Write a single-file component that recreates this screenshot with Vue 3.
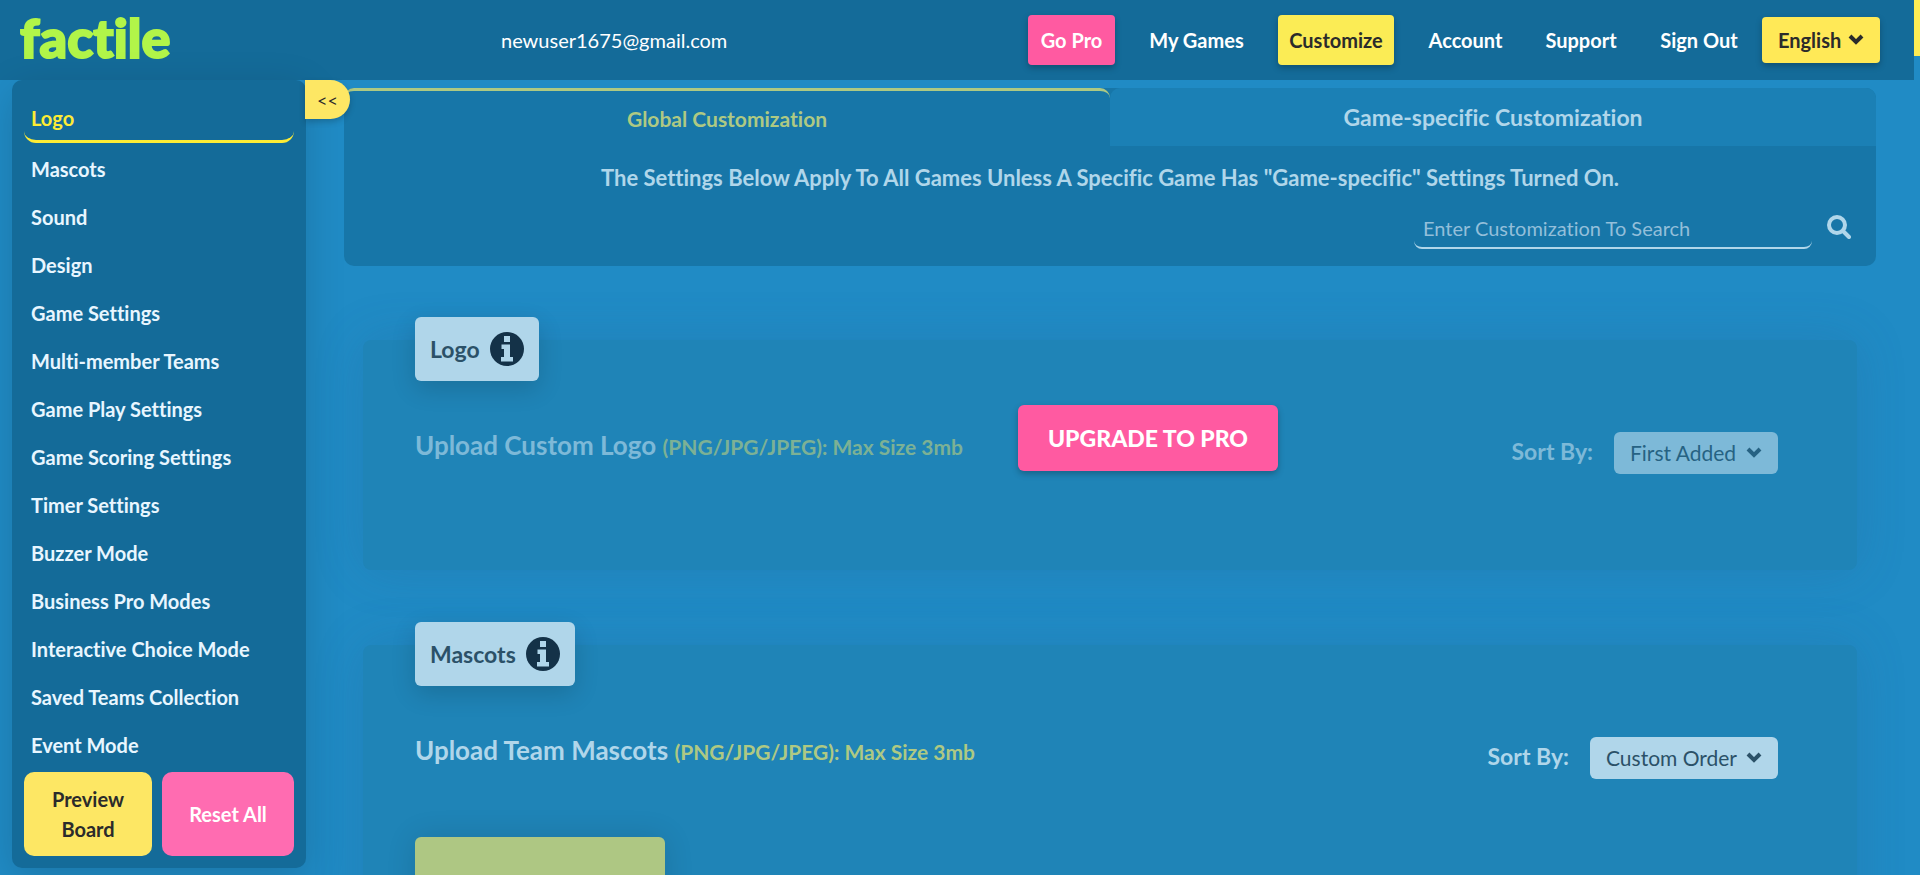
<script setup>
import { ref } from 'vue'

const menu = [
  'Logo', 'Mascots', 'Sound', 'Design', 'Game Settings', 'Multi-member Teams',
  'Game Play Settings', 'Game Scoring Settings', 'Timer Settings', 'Buzzer Mode',
  'Business Pro Modes', 'Interactive Choice Mode', 'Saved Teams Collection', 'Event Mode',
]
const active = ref('Logo')
const search = ref('')
const sections = [
  { id: 'logo', name: 'Logo', title: 'Upload Custom Logo', sort: 'First Added', locked: true },
  { id: 'mascots', name: 'Mascots', title: 'Upload Team Mascots', sort: 'Custom Order', locked: false },
]
</script>

<template>
  <div class="window">
    <div class="page">
      <header class="topbar">
        <a class="brand" href="#">factile</a>
        <span class="email">newuser1675@gmail.com</span>
        <nav class="nav">
          <a class="pill pink" href="#">Go Pro</a>
          <a class="games" href="#">My Games</a>
          <a class="pill yellow" href="#">Customize</a>
          <a class="account" href="#">Account</a>
          <a class="support" href="#">Support</a>
          <a class="signout" href="#">Sign Out</a>
        </nav>
        <div class="picker language">
          <select aria-label="Language"><option>English</option></select>
          <svg class="chevron" viewBox="0 0 16 12"><path d="M2 3l6 6 6-6" /></svg>
        </div>
      </header>

      <div class="body">
        <aside class="sidebar">
          <button class="toggle" type="button" aria-label="Collapse menu">&lt;&lt;</button>
          <nav class="menu">
            <a
              v-for="item in menu"
              :key="item"
              href="#"
              :class="{ active: item === active }"
              @click.prevent="active = item"
            >{{ item }}</a>
          </nav>
          <div class="actions">
            <button class="preview" type="button">Preview Board</button>
            <button class="reset" type="button">Reset All</button>
          </div>
        </aside>

        <main class="content">
          <section class="intro">
            <div class="tabs">
              <button class="tab current" type="button">Global Customization</button>
              <button class="tab other" type="button">Game-specific Customization</button>
            </div>
            <p class="note">The Settings Below Apply To All Games Unless A Specific Game Has "Game-specific" Settings Turned On.</p>
            <form class="search" @submit.prevent>
              <input v-model="search" type="text" aria-label="Search customization" placeholder="Enter Customization To Search" />
              <button type="submit" aria-label="Search">
                <svg viewBox="0 0 24 24"><circle cx="10" cy="10" r="8" /><path d="M16 16l6 6" /></svg>
              </button>
            </form>
          </section>

          <section v-for="s in sections" :key="s.id" class="card" :class="{ locked: s.locked }">
            <h2 class="badge">
              {{ s.name }}
              <svg viewBox="0 0 34 34">
                <circle cx="17" cy="17" r="17" />
                <path d="M14 4h6v6h-6zM11.500 12.500h8.500v12.500h3v4.500h-12v-4.500h3v-8h-2.500z" />
              </svg>
            </h2>
            <div class="row">
              <h3 class="title">{{ s.title }} <small>(PNG/JPG/JPEG): Max Size 3mb</small></h3>
              <label class="sort-label" :for="'sort-' + s.id">Sort By:</label>
              <div class="picker" :class="s.id">
                <select :id="'sort-' + s.id"><option>{{ s.sort }}</option></select>
                <svg class="chevron" viewBox="0 0 16 12"><path d="M2 3l6 6 6-6" /></svg>
              </div>
            </div>
            <button v-if="s.locked" class="upgrade" type="button">UPGRADE TO PRO</button>
            <div v-else class="tile"></div>
          </section>
        </main>
      </div>
    </div>
    <div class="track"><div class="thumb"></div></div>
  </div>
</template>

<style>
body {
  background: #208bc5;
  overflow: hidden;
}
</style>

<style scoped>
.window {
  display: flex;
  height: 100vh;
  overflow: hidden;
  background: #208bc5;
  font-family: Lato, "Liberation Sans", sans-serif;
  font-size: 20px;
  line-height: 30px;
  font-variant-ligatures: none;
  color: #fff;
}
.window *,
.window {
  box-sizing: border-box;
}
a {
  color: inherit;
  text-decoration: none;
}
button,
select,
input {
  font: inherit;
  font-variant-ligatures: none;
  color: inherit;
  border: 0;
  padding: 0;
  background: none;
}
button,
select {
  cursor: pointer;
}
.page {
  flex: 1;
  min-width: 0;
}
.track {
  width: 6px;
}
.thumb {
  height: 56px;
  background: #fdec54;
}

.topbar {
  display: flex;
  align-items: center;
  height: 80px;
  padding: 0 34px 0 20px;
  background: #146b99;
}
.brand {
  width: 481px;
  padding-bottom: 4px;
  font-size: 54px;
  font-weight: 900;
  line-height: 72px;
  color: #b2f549;
  -webkit-text-stroke: 2px #b2f549;
}
.email {
  flex: 1;
}
.nav {
  display: flex;
  align-items: center;
  gap: 34px;
  font-weight: 700;
  text-align: center;
  white-space: nowrap;
}
.pill {
  height: 50px;
  line-height: 50px;
  border-radius: 4px;
  box-shadow: 0 3px 6px rgba(0, 0, 0, 0.25);
}
.pink {
  width: 87px;
  background: #ff5aa1;
}
.games {
  width: 95px;
}
.yellow {
  width: 116px;
  background: #fbec55;
  color: #2b2b2b;
}
.account {
  width: 75px;
}
.support {
  width: 88px;
}
.signout {
  width: 80px;
}

.picker {
  position: relative;
  height: 42px;
  border-radius: 6px;
  background: #b0d6ea;
  color: #2b5168;
  font-size: 21px;
}
.picker select {
  appearance: none;
  width: 100%;
  height: 100%;
  padding-left: 16px;
  border-radius: inherit;
}
.chevron {
  position: absolute;
  right: 16px;
  top: 50%;
  width: 16px;
  height: 12px;
  margin-top: -7px;
  fill: none;
  stroke: currentColor;
  stroke-width: 4;
  pointer-events: none;
}
.picker.language {
  width: 118px;
  height: 46px;
  margin-left: 23px;
  border-radius: 4px;
  background: #ffe957;
  color: #2b2b2b;
  font-size: 20px;
  font-weight: 700;
  box-shadow: 0 3px 6px rgba(0, 0, 0, 0.25);
}
.picker.logo {
  width: 164px;
}
.picker.mascots {
  width: 188px;
}

.body {
  display: flex;
  align-items: flex-start;
  padding: 0 38px 0 12px;
}
.sidebar {
  position: relative;
  flex: none;
  width: 294px;
  margin-right: 38px;
  padding: 15px 12px 12px;
  border-radius: 10px;
  background: #146b99;
  box-shadow: 0 10px 40px rgba(0, 0, 0, 0.15);
}
.toggle {
  position: absolute;
  top: 0;
  left: 293px;
  width: 45px;
  height: 39px;
  border-radius: 0 20px 20px 0;
  background: #fde764;
  color: #2b2b2b;
  font-size: 18px;
  box-shadow: 0 3px 6px rgba(0, 0, 0, 0.2);
}
.menu {
  display: flex;
  flex-direction: column;
  font-weight: 700;
  color: #e8f6ff;
}
.menu a {
  height: 48px;
  padding: 0 7px;
  line-height: 48px;
}
.menu .active {
  margin-bottom: 2px;
  border-bottom: 3px solid #fdec35;
  border-radius: 12px;
  line-height: 46px;
  color: #fdec35;
}
.actions {
  display: flex;
  gap: 10px;
  margin-top: 3px;
}
.actions button {
  height: 84px;
  border-radius: 10px;
  font-weight: 700;
}
.preview {
  width: 128px;
  padding: 0 20px;
  background: #fde764;
  color: #2b2b2b;
}
.reset {
  flex: 1;
  background: #ff6cb1;
}

.content {
  flex: 1;
  min-width: 0;
  padding-top: 8px;
}
.intro {
  padding-bottom: 17px;
  border-radius: 10px;
  background: #1776a8;
  color: #b0d6ea;
}
.tabs {
  display: grid;
  grid-template-columns: 1fr 1fr;
  height: 58px;
  font-weight: 700;
}
.tab.current {
  border-top: 3px solid #aec983;
  border-radius: 10px 10px 0 0;
  color: #aec983;
  font-size: 21px;
}
.tab.other {
  border-radius: 10px 10px 0 0;
  background: #1b80b5;
  font-size: 23px;
}
.note {
  margin: 17px 0 0;
  font-size: 22px;
  font-weight: 700;
  text-align: center;
}
.search {
  display: flex;
  justify-content: flex-end;
  align-items: center;
  gap: 15px;
  margin-top: 12px;
  padding-right: 25px;
}
.search input {
  width: 398px;
  height: 44px;
  padding: 4px 9px 0;
  border-bottom: 2px solid #b0d6ea;
  border-radius: 8px;
  outline: 0;
}
.search input::placeholder {
  color: #93bfda;
  opacity: 1;
}
.search button {
  height: 24px;
}
.search svg {
  display: block;
  width: 24px;
  height: 24px;
  fill: none;
  stroke: #b0d6ea;
  stroke-width: 4;
  stroke-linecap: round;
}

.card {
  position: relative;
  height: 230px;
  margin: 74px 19px 0;
  padding: 90px 79px 0 52px;
  border-radius: 8px;
  background: #1f84b7;
  box-shadow: 0 0 50px rgba(40, 90, 140, 0.2);
}
.card + .card {
  height: 500px;
  margin-top: 75px;
}
.badge {
  position: absolute;
  top: -23px;
  left: 52px;
  display: flex;
  align-items: center;
  gap: 10px;
  height: 64px;
  margin: 0;
  padding: 0 15px;
  border-radius: 6px;
  background: #b0d6ea;
  color: #2b5168;
  font-size: 23px;
  font-weight: 700;
  box-shadow: 0 8px 24px rgba(0, 0, 0, 0.15);
}
.badge svg {
  width: 34px;
  height: 34px;
  fill: #143248;
}
.badge path {
  fill: #b0d6ea;
}
.row {
  display: flex;
  align-items: center;
  color: #b0d6ea;
}
.title {
  flex: 1;
  margin: 0 0 14px;
  font-size: 26px;
  font-weight: 700;
}
.title small {
  color: #aec983;
  font-size: 21px;
}
.sort-label {
  margin: 0 21px 4px 0;
  font-size: 23px;
  font-weight: 700;
}
.locked .row {
  opacity: 0.65;
}
.upgrade {
  position: absolute;
  top: 65px;
  left: 655px;
  width: 260px;
  height: 66px;
  border-radius: 6px;
  background: #ff5aa1;
  font-size: 23px;
  font-weight: 900;
  box-shadow: 0 3px 6px rgba(0, 0, 0, 0.25);
}
.tile {
  width: 250px;
  height: 250px;
  margin-top: 56px;
  border-radius: 6px;
  background: #aec783;
  box-shadow: 0 0 30px rgba(0, 0, 0, 0.12);
}
</style>
